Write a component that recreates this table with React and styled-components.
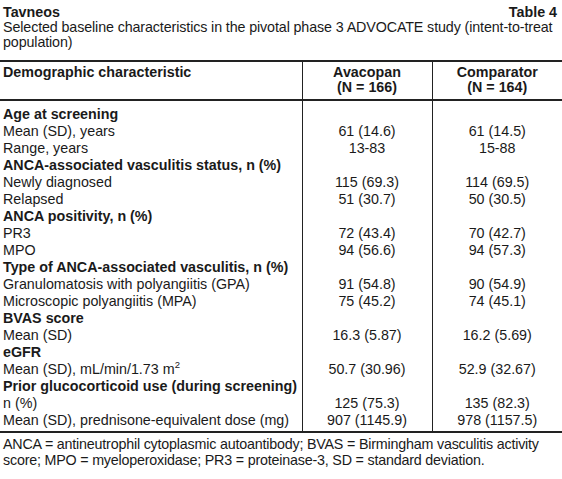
import styled, { createGlobalStyle } from "styled-components";

const GlobalStyle = createGlobalStyle`
    body {
        margin: 0;
        background: #ffffff;
    }
`;

const Page = styled.div`
    width: 562px;
    font-family: "Liberation Sans", Arial, sans-serif;
    font-size: 14.3px;
    color: #1a1a1a;
`;

const Caption = styled.div`
    padding: 4px 5px 0 3px;
`;

const TitleRow = styled.div`
    display: flex;
    justify-content: space-between;
    font-weight: bold;
    line-height: 16px;
`;

const Subtitle = styled.div`
    line-height: 15px;
    letter-spacing: -0.12px;
    margin-bottom: 10px;
`;

const Table = styled.table`
    width: 100%;
    border-collapse: collapse;
    border-top: 2px solid #222;
    border-bottom: 2px solid #222;
    table-layout: fixed;
`;

const HeadCell = styled.th`
    font-weight: bold;
    line-height: 15px;
    padding: 3px 3px 4px;
    vertical-align: top;
    text-align: ${(props) => (props.$left ? "left" : "center")};
    border-bottom: 2px solid #222;
    border-left: ${(props) => (props.$left ? "none" : "1.5px solid #222")};
`;

const Cell = styled.td`
    line-height: 17px;
    padding: 0 3px;
    white-space: nowrap;
    text-align: ${(props) => (props.$left ? "left" : "center")};
    font-weight: ${(props) => (props.$bold ? "bold" : "normal")};
    border-left: ${(props) => (props.$left ? "none" : "1.5px solid #222")};
    padding-top: ${(props) => (props.$first ? "4.5px" : "0")};
    padding-bottom: ${(props) => (props.$last ? "2px" : "0")};
`;

const Sup = styled.sup`
    font-size: 9.5px;
    line-height: 0;
`;

const Footnote = styled.p`
    margin: 0;
    padding: 3px 3px 0;
    line-height: 16px;
    letter-spacing: -0.2px;
`;

const rows = [
    { head: "Age at screening" },
    { label: "Mean (SD), years", a: "61 (14.6)", b: "61 (14.5)" },
    { label: "Range, years", a: "13-83", b: "15-88" },
    { head: "ANCA-associated vasculitis status, n (%)" },
    { label: "Newly diagnosed", a: "115 (69.3)", b: "114 (69.5)" },
    { label: "Relapsed", a: "51 (30.7)", b: "50 (30.5)" },
    { head: "ANCA positivity, n (%)" },
    { label: "PR3", a: "72 (43.4)", b: "70 (42.7)" },
    { label: "MPO", a: "94 (56.6)", b: "94 (57.3)" },
    { head: "Type of ANCA-associated vasculitis, n (%)" },
    { label: "Granulomatosis with polyangiitis (GPA)", a: "91 (54.8)", b: "90 (54.9)" },
    { label: "Microscopic polyangiitis (MPA)", a: "75 (45.2)", b: "74 (45.1)" },
    { head: "BVAS score" },
    { label: "Mean (SD)", a: "16.3 (5.87)", b: "16.2 (5.69)" },
    { head: "eGFR" },
    {
        label: (
            <>
                Mean (SD), mL/min/1.73 m<Sup>2</Sup>
            </>
        ),
        a: "50.7 (30.96)",
        b: "52.9 (32.67)",
    },
    { head: "Prior glucocorticoid use (during screening)" },
    { label: "n (%)", a: "125 (75.3)", b: "135 (82.3)" },
    { label: "Mean (SD), prednisone-equivalent dose (mg)", a: "907 (1145.9)", b: "978 (1157.5)" },
];

const App = () => {
    const last = rows.length - 1;

    return (
        <Page>
            <GlobalStyle />
            <Caption>
                <TitleRow>
                    <span>Tavneos</span>
                    <span>Table 4</span>
                </TitleRow>
                <Subtitle>
                    Selected baseline characteristics in the pivotal phase 3 ADVOCATE study
                    (intent-to-treat population)
                </Subtitle>
            </Caption>
            <Table>
                <colgroup>
                    <col style={{ width: "302px" }} />
                    <col style={{ width: "130px" }} />
                    <col style={{ width: "130px" }} />
                </colgroup>
                <thead>
                    <tr>
                        <HeadCell $left>Demographic characteristic</HeadCell>
                        <HeadCell>
                            Avacopan
                            <br />
                            (N = 166)
                        </HeadCell>
                        <HeadCell>
                            Comparator
                            <br />
                            (N = 164)
                        </HeadCell>
                    </tr>
                </thead>
                <tbody>
                    {rows.map((row, i) => (
                        <tr key={i}>
                            <Cell $left $bold={!!row.head} $first={i === 0} $last={i === last}>
                                {row.head || row.label}
                            </Cell>
                            <Cell $first={i === 0} $last={i === last}>
                                {row.a}
                            </Cell>
                            <Cell $first={i === 0} $last={i === last}>
                                {row.b}
                            </Cell>
                        </tr>
                    ))}
                </tbody>
            </Table>
            <Footnote>
                ANCA = antineutrophil cytoplasmic autoantibody; BVAS = Birmingham vasculitis activity
                score; MPO = myeloperoxidase; PR3 = proteinase-3, SD = standard deviation.
            </Footnote>
        </Page>
    );
};

export default App;
